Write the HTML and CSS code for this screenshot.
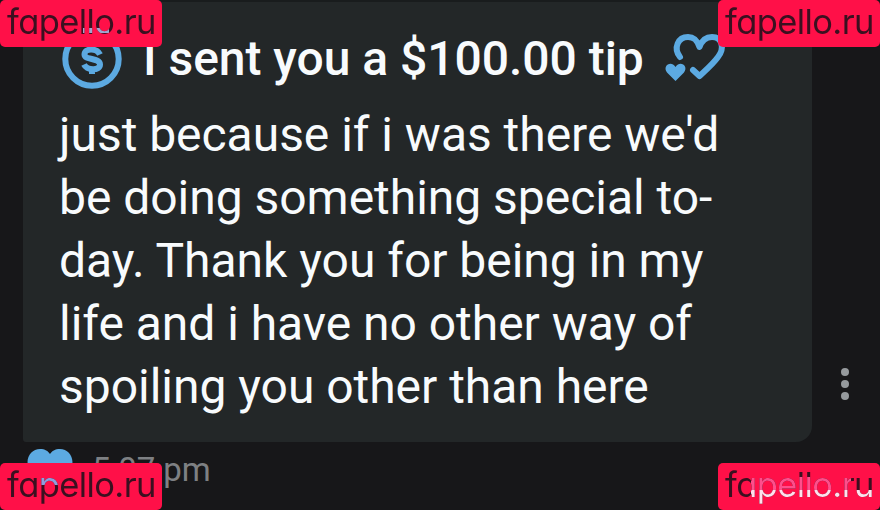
FILE: index.html
```
<!DOCTYPE html>
<html lang="en">
<head>
<meta charset="utf-8">
<title>Message</title>
<link rel="stylesheet" href="styles.css">
</head>
<body>
<main class="chat">
  <div class="row">
    <article class="bubble">
      <h1 class="tip">
        <svg class="coin" viewBox="0 0 60 60"><circle cx="30" cy="30" r="26.7"/><path d="M38 25.500C35 19 22.500 18.500 22.500 25.500C22.500 31.500 38 28.500 38 35.500C38 42 25 41.500 22 35.500M30 16v5M30 40v5"/></svg>
        <span class="tip-text">I sent you a $100.00 tip</span>
        <svg class="hearts" viewBox="0 0 60 50"><path class="line" d="M15 23C8 14 13 3 23 3C29 3 32 6 34.500 13C37 6 41 3 47 3C57 3 60 14 53 23C48 30 41 36 34.500 42L28 36"/><path class="fill" d="M10.500 47L2 38.500C-3 32 6 26 10.500 33C15 26 24 32 19 38.500Z"/></svg>
      </h1>
      <p class="message">just because if i was there we'd<br>be doing something special to-<br>day. Thank you for being in my<br>life and i have no other way of<br>spoiling you other than here</p>
    </article>
    <div class="menu"><i></i><i></i><i></i></div>
  </div>
  <footer class="meta">
    <svg class="like" viewBox="0 0 46 42"><path d="M23 42L4 23C-4 12 3 0 13 0C18 0 21 2 23 5C25 2 28 0 33 0C43 0 50 12 42 23Z"/></svg>
    <time>5:07 pm</time>
  </footer>
</main>
<div class="mark top left"><span>fapello.ru</span></div>
<div class="mark top right"><span>fapello.ru</span></div>
<div class="mark bottom left"><span>fapello.ru</span></div>
<div class="mark bottom right"><span>fapello.ru</span></div>
</body>
</html>
```
FILE: styles.css
```
* { box-sizing: border-box; }
body { margin: 0; width: 880px; height: 510px; overflow: hidden; background: #171719; font-family: Roboto, sans-serif; }
.chat { padding-left: 23px; }
.row { display: flex; height: 442px; }
.bubble { width: 789px; height: 442px; padding: 27px 0 0 37px; background: #232728; border-top: 2px solid #191c1d; border-radius: 0 0 16px 3px; color: #f8fbfd; }
.tip { display: flex; align-items: center; height: 60px; margin: 0; font-size: 48px; line-height: 60px; font-weight: 500; white-space: nowrap; }
.coin { width: 60px; height: 60px; margin-left: 2px; flex: none; fill: none; stroke: #5caae2; stroke-width: 6; }
.tip-text { width: 522px; margin-left: 21px; letter-spacing: -.03px; }
.hearts { width: 60px; height: 50px; flex: none; overflow: visible; }
.hearts .line { fill: none; stroke: #5caae2; stroke-width: 6; stroke-linecap: round; stroke-linejoin: round; }
.hearts .fill { fill: #5caae2; }
.message { margin: 14px 0 0 -1px; font-size: 48px; line-height: 63px; white-space: nowrap; letter-spacing: -.03px; }
.menu { display: flex; flex-direction: column; gap: 4px; margin: 368px 0 0 29px; }
.menu i { width: 8px; height: 8px; border-radius: 50%; background: #969a9d; }
.meta { display: flex; align-items: flex-start; padding: 7px 0 0 4px; color: #7e8083; font-size: 33px; line-height: 40px; }
.like { width: 46px; height: 42px; fill: #5caae2; }
time { margin: 1px 0 0 19px; letter-spacing: -.1px; }
.mark { position: absolute; width: 162px; height: 47px; padding-left: 7px; background: #ff1048; border-radius: 5px; overflow: hidden; font: 400 34.500px/43px Inter, sans-serif; font-feature-settings: "cv11"; letter-spacing: -.6px; white-space: nowrap; }
.top { top: 0; }
.bottom { top: 463px; }
.left { left: 0; }
.right { left: 718px; }
.mark span { display: inline-block; color: transparent; background: #3b1020; -webkit-background-clip: text; background-clip: text; }
.top.left span { background: linear-gradient(#a2a4d0, #a2a4d0) 76px 28px / 26px 5px no-repeat, #3b1020; -webkit-background-clip: text; background-clip: text; }
.bottom.left span { background: linear-gradient(#8f9ddd, #8f9ddd) 33px 14px / 20px 8px no-repeat, #3b1020; -webkit-background-clip: text; background-clip: text; }
.bottom.right span { background: linear-gradient(#ffe0ec, #ffe0ec) 26px 27px / 130px 16px no-repeat, linear-gradient(#ff4e8c, #ff4e8c) 26px 14px / 100px 13px no-repeat, #3b1020; -webkit-background-clip: text; background-clip: text; }
```
